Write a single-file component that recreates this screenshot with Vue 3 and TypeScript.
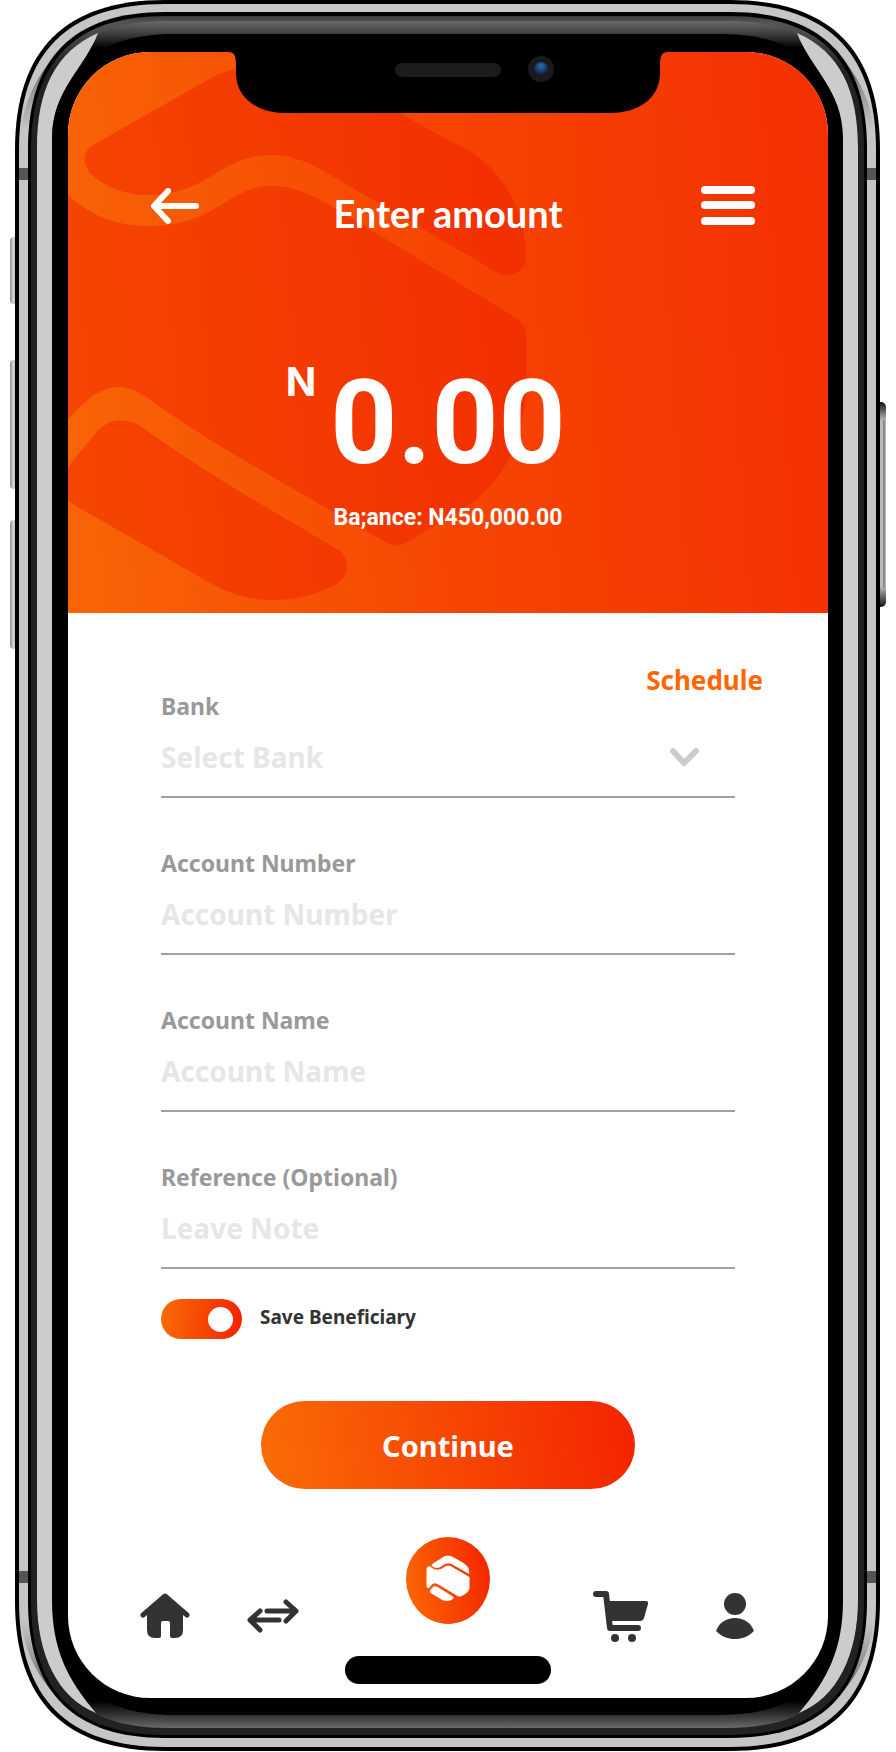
<script setup lang="ts">
import { reactive, ref } from 'vue'

interface Field {
  id: 'number' | 'name' | 'note'
  label: string
  placeholder: string
}

const fields: Field[] = [
  { id: 'number', label: 'Account Number', placeholder: 'Account Number' },
  { id: 'name', label: 'Account Name', placeholder: 'Account Name' },
  { id: 'note', label: 'Reference (Optional)', placeholder: 'Leave Note' },
]

const form = reactive<Record<Field['id'], string>>({ number: '', name: '', note: '' })
const bank = ref('')
const saveBeneficiary = ref(true)

/** Rounded body outline with the continuous corners of a handset. */
function outline(l: number, t: number, r: number, b: number, rad: number): string {
  const k = rad / 3
  return [
    `M${l} ${t + rad}C${l} ${t + k} ${l + k} ${t} ${l + rad} ${t}`,
    `H${r - rad}C${r - k} ${t} ${r} ${t + k} ${r} ${t + rad}`,
    `V${b - rad}C${r} ${b - k} ${r - k} ${b} ${r - rad} ${b}`,
    `H${l + rad}C${l + k} ${b} ${l} ${b - k} ${l} ${b - rad}Z`,
  ].join('')
}

const shell = {
  rim: outline(15, 0, 880, 1751, 150),
  steel: outline(19, 4, 876, 1747, 146),
  seam: outline(28, 12, 867, 1738, 137),
  band: outline(31, 16, 864, 1735, 134),
  glass: outline(37, 21, 858, 1728, 130),
  face: outline(52, 34, 843, 1715, 122),
}

const corners = [
  '',
  'matrix(-1 0 0 1 895 0)',
  'matrix(1 0 0 -1 0 1751)',
  'matrix(-1 0 0 -1 895 1751)',
]
const sideKeys = [
  { y: 237, h: 67 },
  { y: 360, h: 129 },
  { y: 520, h: 129 },
]
</script>

<template>
  <div class="phone">
    <svg class="shell" viewBox="0 0 896 1752" preserveAspectRatio="none" aria-hidden="true">
      <defs>
        <linearGradient id="key" x1="0" x2="1" y1="0" y2="0">
          <stop offset="0" stop-color="#8d8d8d" />
          <stop offset=".35" stop-color="#d6d6d6" />
          <stop offset=".6" stop-color="#a5a5a5" />
          <stop offset="1" stop-color="#8a8a8a" />
        </linearGradient>
        <linearGradient id="power" x1="0" x2="0" y1="0" y2="1">
          <stop offset="0" stop-color="#111" />
          <stop offset=".09" stop-color="#b9b9b9" />
          <stop offset=".9" stop-color="#b9b9b9" />
          <stop offset="1" stop-color="#111" />
        </linearGradient>
        <linearGradient id="bandFill" gradientUnits="userSpaceOnUse" x1="0" x2="0" y1="16" y2="1735">
          <stop offset="0" stop-color="#3c3c3c" />
          <stop offset=".004" stop-color="#555" />
          <stop offset=".03" stop-color="#222" />
          <stop offset="1" stop-color="#222" />
        </linearGradient>
        <linearGradient id="glassFill" gradientUnits="userSpaceOnUse" x1="0" x2="0" y1="21" y2="1728">
          <stop offset="0" stop-color="#6a6a6a" />
          <stop offset=".008" stop-color="#3a3a3a" />
          <stop offset=".016" stop-color="#000" />
          <stop offset=".984" stop-color="#000" />
          <stop offset=".992" stop-color="#303030" />
          <stop offset="1" stop-color="#6a6a6a" />
        </linearGradient>
        <linearGradient id="shade" gradientUnits="userSpaceOnUse" x1="0" x2="0" y1="20" y2="130">
          <stop offset="0" stop-color="#333" />
          <stop offset=".3" stop-color="#4a4a4a" />
          <stop offset=".65" stop-color="#999697" />
          <stop offset="1" stop-color="#c8c5c7" />
        </linearGradient>
      </defs>
      <rect v-for="k in sideKeys" :key="k.y" x="10" :y="k.y" width="10" :height="k.h" rx="4" fill="url(#key)" />
      <rect x="874" y="402" width="12" height="205" rx="5" fill="url(#power)" />
      <rect x="883" y="420" width="2" height="168" fill="#8a8a8a" />
      <path :d="shell.rim" fill="#000" />
      <path :d="shell.steel" fill="#c8c5c7" />
      <g v-for="c in corners" :key="c" :transform="c">
        <path d="M21 130C24 104 34 82 49 63C63 46 80 32 104 22L100 34L62 62L30 130Z" fill="url(#shade)" />
        <rect x="19" y="168" width="10" height="12" fill="#555" />
      </g>
      <path :d="shell.seam" fill="#000" />
      <path :d="shell.band" fill="url(#bandFill)" />
      <path :d="shell.glass" fill="url(#glassFill)" />
      <path :d="shell.face" fill="#000" />
      <g v-for="c in corners.slice(0, 2)" :key="'s' + c" :transform="c">
        <path
          d="M98 33C55 52 37 90 37 148V1600C37 1655 58 1698 96 1713C68 1680 52 1650 52 1600V138C52 90 85 68 98 33Z"
          fill="#ccc"
        />
      </g>
    </svg>

    <main class="screen">
      <svg class="notch" viewBox="0 0 440 61" aria-hidden="true">
        <defs>
          <radialGradient id="lens" cx=".5" cy=".3" r=".7">
            <stop offset="0" stop-color="#2d6cb0" />
            <stop offset=".5" stop-color="#1d3f73" />
            <stop offset="1" stop-color="#0a1224" />
          </radialGradient>
        </defs>
        <path d="M0 0C6 0 8 3 8 13V21C8 45 28 61 58 61H382C412 61 432 45 432 21V13C432 3 434 0 440 0Z" />
        <rect x="167" y="11" width="106" height="14" rx="7" fill="#1c1c1c" />
        <circle cx="313" cy="17" r="13" fill="#1a1a1a" />
        <circle cx="313" cy="17" r="7" fill="url(#lens)" />
      </svg>

      <section class="hero">
        <svg class="pattern" viewBox="68 52 760 561" preserveAspectRatio="xMinYMin slice" aria-hidden="true">
          <defs>
            <linearGradient id="mark" gradientUnits="userSpaceOnUse" x1="68" y1="300" x2="527" y2="260">
              <stop offset="0" stop-color="#f54502" />
              <stop offset="1" stop-color="#f22f00" />
            </linearGradient>
          </defs>
          <g fill="url(#mark)">
            <path
              d="M240 67C228 70 215 75 204 82L93 145C82 151 82 165 91 174C107 188 125 195 148 195C172 195 190 189 212 176C232 163 248 155 270 155C290 155 306 161 322 170L498 273C512 280 526 270 526 257C526 220 512 190 491 168C478 154 464 147 448 140L400 113L340 70Z"
            />
            <path
              d="M68 195C90 215 115 226 148 226C180 226 200 218 224 203C240 193 252 186 271 186C292 186 308 193 326 203L515 317C523 322 527 330 527 338V372C527 425 511 478 466 507L409 541C401 547 393 547 385 542L333 512L230 452C205 437 175 418 152 401C140 393 130 387 119 387C100 387 83 402 68 420Z"
            />
            <path
              d="M68 467L95 434C107 419 124 417 140 426C155 436 170 447 190 460C235 490 285 518 337 549C350 556 350 576 338 583C318 594 298 600 273 600C248 600 230 594 210 583L76 506L68 500Z"
            />
          </g>
        </svg>

        <header class="bar">
          <button class="icon-btn" type="button" aria-label="Back">
            <svg width="49" height="36" viewBox="0 0 49 36" class="line light">
              <path d="M18 3L4 18L18 33M5 18H46" />
            </svg>
          </button>
          <h1>Enter amount</h1>
          <button class="icon-btn end" type="button" aria-label="Menu">
            <svg width="54" height="39" viewBox="0 0 54 39" fill="#fff">
              <rect width="54" height="8" rx="4" />
              <rect y="15" width="54" height="8" rx="4" />
              <rect y="31" width="54" height="8" rx="4" />
            </svg>
          </button>
        </header>

        <p class="amount"><span class="currency">N</span><span class="value">0.00</span></p>
        <p class="balance">Ba;ance: N450,000.00</p>
      </section>

      <form class="form" @submit.prevent>
        <a class="schedule" href="#schedule">Schedule</a>

        <div class="field">
          <label for="bank">Bank</label>
          <div class="select">
            <select id="bank" v-model="bank">
              <option value="">Select Bank</option>
            </select>
            <svg width="29" height="20" viewBox="0 0 29 20" aria-hidden="true">
              <path d="M3 4L14 16L26 4" />
            </svg>
          </div>
        </div>

        <div v-for="f in fields" :key="f.id" class="field">
          <label :for="f.id">{{ f.label }}</label>
          <input :id="f.id" v-model="form[f.id]" type="text" :placeholder="f.placeholder" />
        </div>

        <label class="save">
          <input v-model="saveBeneficiary" type="checkbox" role="switch" />
          <span>Save Beneficiary</span>
        </label>

        <button class="submit" type="submit">Continue</button>
      </form>

      <nav class="tabs" aria-label="Main">
        <div class="group">
          <a href="#home" aria-label="Home">
            <svg width="50" height="46" viewBox="0 0 50 46">
              <path d="M3 22L25 3L47 22" class="roof" />
              <path
                d="M7 19L25 4L43 19V37Q43 45 35 45H32Q30 45 30 43V30Q30 28 28 28H23Q21 28 21 30V43Q21 45 19 45H15Q7 45 7 37Z"
              />
            </svg>
          </a>
          <a href="#transfer" aria-label="Transfer">
            <svg width="52" height="34" viewBox="0 0 52 34" class="line">
              <path d="M20 12H49M39 3L49 12L39 22M32 21H3M13 12L3 21L13 31" />
            </svg>
          </a>
        </div>
        <button class="fab" type="button" aria-label="Services">
          <svg width="44" height="47" viewBox="0 0 44 47" fill="#fff">
            <path
              d="M6 9.3L16 2.8C20 .2 24 .2 28 2.5L37 7.8C42 11 43.5 14 43.2 18.5Q42.5 19 40.5 17.6L25 8.8C22 7.5 19.5 8.5 16 11C12.5 13.5 9 13.5 6.3 11.5Q5 10.3 6 9.3Z"
            />
            <path
              d="M2 11.5Q4 10.5 5.5 12.5C10 16 14 15 18 12.3C21.5 10 24 10.5 27 12.5L43.5 22V32C43.5 36 41 38 37.5 40C35 41.5 34 42 31.5 41L14 30.5C9 27.5 8 27.5 5 30.5L3 33Q.5 33.5 .5 31V15Q.5 12 2 11.5Z"
            />
            <path d="M4 35.5L6.5 32.5C8 31 9.5 31 11.5 32L27 41.5Q28.5 43 27 44C23.5 46.5 19 46.5 15 44.3L5 38.3Q3 37 4 35.5Z" />
          </svg>
        </button>
        <div class="group end">
          <a href="#shop" aria-label="Shop">
            <svg width="57" height="52" viewBox="0 0 57 52">
              <path d="M4 4H14L18 38H46" class="frame" />
              <path d="M15 11H54Q56.5 11 56 14L52 28Q51 31 48 31H18Z" />
              <circle cx="23" cy="48" r="4" />
              <circle cx="40" cy="48" r="4" />
            </svg>
          </a>
          <a href="#profile" aria-label="Profile">
            <svg width="40" height="48" viewBox="0 0 40 48">
              <circle cx="20" cy="12" r="11" />
              <path d="M1 39C4 31 11 26 20 26S36 31 39 39C33 45 27 47 20 47S7 45 1 39Z" />
            </svg>
          </a>
        </div>
      </nav>
      <div class="indicator"></div>
    </main>
  </div>
</template>

<style>
body {
  margin: 0;
  background: #fff;
}
</style>

<style scoped>
.phone {
  position: relative;
  box-sizing: border-box;
  padding: 52px 68px 54px;
  font-family: 'Noto Sans', 'Open Sans', sans-serif;
  font-weight: 700;
}

.shell {
  position: absolute;
  inset: 0;
  width: 100%;
  height: 100%;
}

.screen {
  position: relative;
  overflow: hidden;
  border-radius: 82px;
  background: #fff;
  padding-bottom: 14px;
}

.notch {
  position: absolute;
  z-index: 2;
  top: 0;
  left: 50%;
  width: 440px;
  margin-left: -220px;
}

.hero {
  position: relative;
  box-sizing: border-box;
  min-height: 561px;
  padding-top: 134px;
  color: #fff;
  background: linear-gradient(86deg, #f86505 0%, #f64503 50%, #f43002 100%);
}

.pattern {
  position: absolute;
  inset: 0;
  width: 100%;
  height: 100%;
}

.bar,
.amount,
.balance {
  position: relative;
  margin: 0;
}

.bar {
  display: grid;
  grid-template-columns: 1fr auto 1fr;
  align-items: start;
  padding: 0 73px;
}

button {
  padding: 0;
  border: 0;
  background: none;
  font: inherit;
  color: inherit;
  cursor: pointer;
}

.icon-btn {
  display: flex;
  align-items: center;
  justify-self: start;
  height: 39px;
  padding-left: 9px;
}

.icon-btn.end {
  justify-self: end;
  padding: 0;
}

h1 {
  margin: 0;
  font: 700 38px/54px Lato, sans-serif;
}

.amount {
  display: grid;
  grid-template-columns: 1fr auto 1fr;
  margin-top: 112px;
}

.currency {
  justify-self: end;
  margin-right: 14px;
  font: 700 40px/60px Inter, sans-serif;
}

.value {
  font: 700 117px/142px Roboto, sans-serif;
}

.balance {
  margin-top: 6px;
  text-align: center;
  font: 700 23px/36px Roboto, sans-serif;
}

.form {
  display: flex;
  flex-direction: column;
  padding: 54px 93px 0;
}

.schedule {
  align-self: flex-end;
  margin-right: -28px;
  font-size: 26px;
  line-height: 27px;
  color: #ff6600;
  text-decoration: none;
}

.field {
  display: flex;
  flex-direction: column;
  gap: 17px;
  margin-bottom: 53px;
  padding-bottom: 17px;
  border-bottom: 2px solid #a0a0a0;
}

.field label {
  font-size: 23px;
  line-height: 24px;
  color: #999;
}

.field input,
.field select {
  box-sizing: border-box;
  width: 100%;
  height: 44px;
  padding: 0;
  border: 0;
  outline: 0;
  background: none;
  appearance: none;
  font: inherit;
  font-size: 28px;
  color: #e6e6e6;
}

.field input::placeholder {
  color: #e6e6e6;
  opacity: 1;
}

.select {
  display: grid;
  align-items: center;
}

.select > * {
  grid-area: 1 / 1;
}

.select svg {
  justify-self: end;
  margin-right: 36px;
  pointer-events: none;
  fill: none;
  stroke: #ccc;
  stroke-width: 6;
  stroke-linecap: round;
  stroke-linejoin: round;
}

.save {
  display: flex;
  align-items: center;
  align-self: flex-start;
  gap: 18px;
  margin-top: -23px;
  font-size: 19px;
  line-height: 36px;
  color: #333;
}

.save span {
  padding-bottom: 4px;
}

.save input {
  display: flex;
  align-items: center;
  justify-content: flex-start;
  appearance: none;
  width: 81px;
  height: 40px;
  margin: 0;
  padding: 0 9px;
  box-sizing: border-box;
  border-radius: 20px;
  background: #ccc;
}

.save input::before {
  content: '';
  width: 25px;
  height: 25px;
  border-radius: 50%;
  background: #fff;
}

.save input:checked {
  justify-content: flex-end;
  background: linear-gradient(95deg, #fa6c05, #f42300);
}

.submit {
  align-self: center;
  width: 65%;
  height: 88px;
  margin-top: 62px;
  border-radius: 44px;
  background: linear-gradient(80deg, #fa6c06, #f42300);
  color: #fff;
  font-size: 29px;
}

.tabs {
  display: grid;
  grid-template-columns: 1fr auto 1fr;
  align-items: end;
  height: 105px;
  margin-top: 48px;
  padding: 0 73px 0 72px;
  fill: #333;
}

.group {
  display: flex;
  align-items: center;
  gap: 57px;
  height: 52px;
}

.group.end {
  justify-content: flex-end;
  gap: 66px;
}

.group a {
  display: flex;
}

.fab {
  display: flex;
  align-items: center;
  justify-content: center;
  align-self: start;
  width: 84px;
  height: 87px;
  padding-bottom: 4px;
  border-radius: 50% / 48% 48% 52% 52%;
  background: linear-gradient(80deg, #fa6a05, #f42300);
}

.line {
  fill: none;
  stroke: #333;
  stroke-width: 5;
  stroke-linecap: round;
  stroke-linejoin: round;
}

.line.light {
  stroke: #fff;
  stroke-width: 6;
}

.roof,
.frame {
  stroke: #333;
  stroke-width: 5;
  stroke-linecap: round;
  stroke-linejoin: round;
}

.frame {
  fill: none;
  stroke-width: 6;
}

.indicator {
  width: 206px;
  height: 28px;
  margin: 14px auto 0;
  border-radius: 14px;
  background: #000;
}
</style>
